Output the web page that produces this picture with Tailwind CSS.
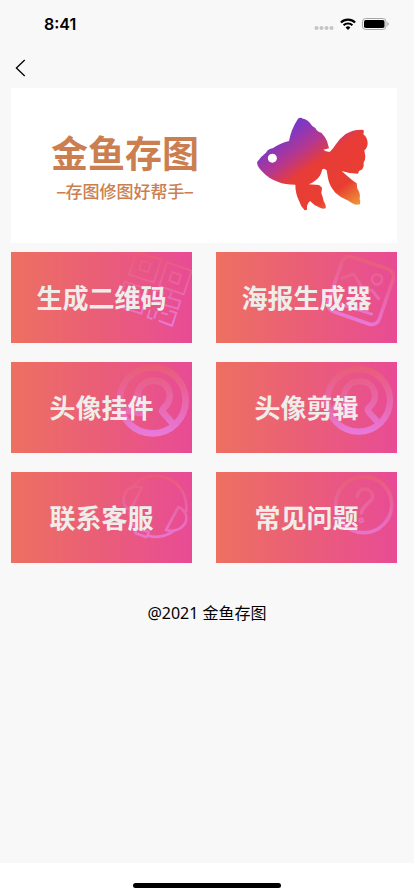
<!DOCTYPE html>
<html lang="zh-CN">
<head>
  <meta charset="UTF-8">
  <meta name="viewport" content="width=device-width, initial-scale=1.0">
  <title>金鱼存图</title>
  <script src="https://cdn.jsdelivr.net/npm/@tailwindcss/browser@4"></script>
</head>
<body class="min-h-screen flex flex-col bg-[#f8f8f8] text-black font-['Noto_Sans','Noto_Sans_CJK_SC',sans-serif]">
  <!-- 状态栏 -->
  <div class="h-12 flex items-center justify-between pl-11 pr-6">
    <span class="font-['Inter',sans-serif] text-base font-semibold">8:41</span>
    <div class="flex items-center gap-1.5">
      <svg class="w-5 h-3" viewBox="0 0 20 12" fill="#c4c4c4">
        <circle cx="2.5" cy="10" r="2"/><circle cx="7.5" cy="10" r="2"/><circle cx="12.5" cy="10" r="2"/><circle cx="17.5" cy="10" r="2"/>
      </svg>
      <svg class="w-4 h-3" viewBox="0 0 16 12" fill="none" stroke="#000" stroke-width="2.2">
        <path d="M.9 4.5a10.2 10.2 0 0 1 14.2 0"/>
        <path d="M3.6 7.3a6.3 6.3 0 0 1 8.8 0"/>
        <path d="M8 12 5.6 9.5a3.5 3.5 0 0 1 4.8 0Z" fill="#000" stroke="none"/>
      </svg>
      <svg class="w-7 h-3" viewBox="0 0 28 12">
        <rect x=".5" y=".5" width="23.5" height="11" rx="3.2" fill="none" stroke="#a6a6a6"/>
        <rect x="2" y="2" width="20.5" height="8" rx="1.8"/>
        <path d="M25.3 4v4q1.4-.6 1.4-2t-1.4-2Z" fill="#a6a6a6"/>
      </svg>
    </div>
  </div>

  <!-- 导航 -->
  <header class="h-10 flex items-center pl-3">
    <a href="#" aria-label="返回" class="block">
      <svg class="w-4 h-5" viewBox="0 0 16 20" fill="none" stroke="#000" stroke-width="1.3">
        <path d="M12.7 2 4.4 10l8.3 8"/>
      </svg>
    </a>
  </header>

  <main class="pl-[11px] pr-[17px]">
    <!-- 横幅 -->
    <section class="bg-white h-[155px] flex items-center justify-between pl-10 pr-[7px]">
      <div class="pt-1 text-[#cb7f51] text-center">
        <h1 class="text-[37px] leading-12 font-bold">金鱼存图</h1>
        <p class="text-[17px] leading-7 font-medium font-['Inter','Noto_Sans_CJK_SC',sans-serif]">–存图修图好帮手–</p>
      </div>
      <svg class="w-[150px] h-[125px] mb-1.5" viewBox="0 0 450 375">
        <defs>
          <linearGradient id="fish" gradientUnits="userSpaceOnUse" x1="130" y1="50" x2="325" y2="330">
            <stop offset="0" stop-color="#6a35d2"/>
            <stop offset=".16" stop-color="#8438be"/>
            <stop offset=".33" stop-color="#b53790"/>
            <stop offset=".5" stop-color="#e83c38"/>
            <stop offset=".8" stop-color="#e83e31"/>
            <stop offset="1" stop-color="#ee9238"/>
          </linearGradient>
        </defs>
        <path fill="url(#fish)" fill-rule="evenodd" d="M51 187Q60 171 78 158Q83 147 98 145Q119 130 147 123Q153 88 174 56Q181 50 189 56Q202 58 210 69Q216 80 226 84Q233 97 244 98Q257 112 261 123L267 145L250 149Q259 157 270 155Q280 146 286 135Q299 115 317 102Q340 88 367 89L372 92L370 103Q381 110 383 128Q383 144 373 151L376 169Q376 181 371 187Q373 200 367 208L357 213L354 221Q328 221 305 213Q321 228 339 242L350 250L352 266Q362 279 359 297Q363 304 360 313L347 314Q334 309 325 302Q303 294 286 278Q268 258 264 235L260 211Q253 203 247 208Q242 232 225 242Q217 249 206 253L237 255L246 263L244 280Q249 292 251 304Q259 316 257 325Q248 329 237 322Q222 316 210 303Q199 313 201 329L194 331Q181 317 177 302Q166 281 166 254Q134 254 115 246Q86 237 66 214Q52 201 51 187ZM97 161a13.5 13.5 0 1 0 .1 0Z"/>
      </svg>
    </section>

    <!-- 功能入口 -->
    <nav class="mt-[9px] grid grid-cols-2 gap-x-6 gap-y-[19px] text-[26px] font-bold text-[#efedea]">
      <a href="#" class="relative h-[91px] pt-0.5 flex items-center justify-center bg-linear-to-r from-[#ed7060] via-[#ea5d78] to-[#e84b95]">
        <svg class="absolute right-0 top-0 h-full opacity-85" viewBox="342 22 220 273" fill="none" stroke="url(#fade)" stroke-width="6">
          <defs>
            <linearGradient id="fade" gradientUnits="userSpaceOnUse" x1="440" y1="30" x2="440" y2="242">
              <stop offset="0" stop-color="#ea5f70"/>
              <stop offset=".35" stop-color="#ea659c"/>
              <stop offset=".7" stop-color="#e973c4"/>
              <stop offset="1" stop-color="#e981ec"/>
            </linearGradient>
          </defs>
          <path stroke-linejoin="round" d="M394 24 469 44 446 113 372 90ZM411 48 437 56 429 82 403 74ZM486 53 560 78 536 149 463 124ZM501 82 528 91 519 118 493 108ZM359 111 430 134 409 207 338 184ZM381 141 405 149 397 174 372 165Z"/>
          <path d="M453 137 475 144 465 174 441 166M488 158 526 169 519 192 480 181M494 157 500 142M435 195 428 218 442 223M455 199 447 222M469 204 489 210M461 228 501 243 514 205 493 198"/>
        </svg>
        <span class="relative">生成二维码</span>
      </a>
      <a href="#" class="relative h-[91px] pt-0.5 flex items-center justify-center bg-linear-to-r from-[#ed7060] via-[#ea5d78] to-[#e84b95]">
        <svg class="absolute right-0 top-0 h-full opacity-85" viewBox="342 22 220 273" fill="none" stroke="url(#fade)" stroke-width="11">
          <rect x="371" y="50" width="162" height="174" rx="24" transform="rotate(19 452 137)"/>
          <path stroke-width="9" d="M393 101 431 88 461 136 486 137 508 165M377 174 488 209"/>
          <circle cx="501" cy="104" r="15" stroke-width="8"/>
        </svg>
        <span class="relative">海报生成器</span>
      </a>
      <a href="#" class="relative h-[91px] pt-0.5 flex items-center justify-center bg-linear-to-r from-[#ed7060] via-[#ea5d78] to-[#e84b95]">
        <svg class="absolute right-0 top-0 h-full opacity-85" viewBox="332 22 230 273" fill="none" stroke="url(#fade)" stroke-width="20">
          <circle cx="445" cy="137" r="99"/>
          <path d="M418 166C382 132 402 78 448 78C495 78 513 131 478 160Q470 168 478 176L505 206M418 166Q416 176 404 175L362 166"/>
        </svg>
        <span class="relative">头像挂件</span>
      </a>
      <a href="#" class="relative h-[91px] pt-0.5 flex items-center justify-center bg-linear-to-r from-[#ed7060] via-[#ea5d78] to-[#e84b95]">
        <svg class="absolute right-0 top-0 h-full opacity-85" viewBox="332 22 230 273" fill="none" stroke="url(#fade)" stroke-width="19">
          <circle cx="448" cy="137" r="94"/>
          <path d="M421 162C388 132 407 80 451 80C496 80 513 130 479 158Q472 165 479 173L504 201M421 162Q420 172 408 171L368 158"/>
        </svg>
        <span class="relative">头像剪辑</span>
      </a>
      <a href="#" class="relative h-[91px] pt-0.5 flex items-center justify-center bg-linear-to-r from-[#ed7060] via-[#ea5d78] to-[#e84b95]">
        <svg class="absolute right-0 top-0 h-full opacity-85" viewBox="342 22 220 273" fill="none" stroke="url(#fade)" stroke-width="8" stroke-linejoin="round">
          <path d="M382 67Q416 27 462 34Q514 42 536 88Q547 115 543 142M411 68 376 136Q354 127 355 102Q357 77 380 69Q394 64 411 68ZM520 127 483 196Q503 203 524 192Q549 176 543 151Q538 135 520 127ZM508 198Q468 225 430 213M374 142Q375 172 394 191M394 191 430 201Q433 209 423 217L391 205Z"/>
        </svg>
        <span class="relative">联系客服</span>
      </a>
      <a href="#" class="relative h-[91px] pt-0.5 flex items-center justify-center bg-linear-to-r from-[#ed7060] via-[#ea5d78] to-[#e84b95]">
        <svg class="absolute right-0 top-0 h-full opacity-85" viewBox="342 22 220 273" fill="none" stroke="url(#fade)" stroke-width="11">
          <circle cx="461" cy="120" r="84"/>
          <path stroke-linecap="round" d="M442 94C445 66 487 67 488 95C488 113 457 120 454 144"/>
          <circle cx="454" cy="167" r="3"/>
        </svg>
        <span class="relative">常见问题</span>
      </a>
    </nav>
  </main>

  <footer class="mt-[38px] text-center text-base">@2021 金鱼存图</footer>

  <!-- 底部横条 -->
  <div class="mt-auto h-[33px] bg-white flex justify-center items-end pb-2">
    <div class="w-[148px] h-[5px] rounded-full bg-black"></div>
  </div>
</body>
</html>
